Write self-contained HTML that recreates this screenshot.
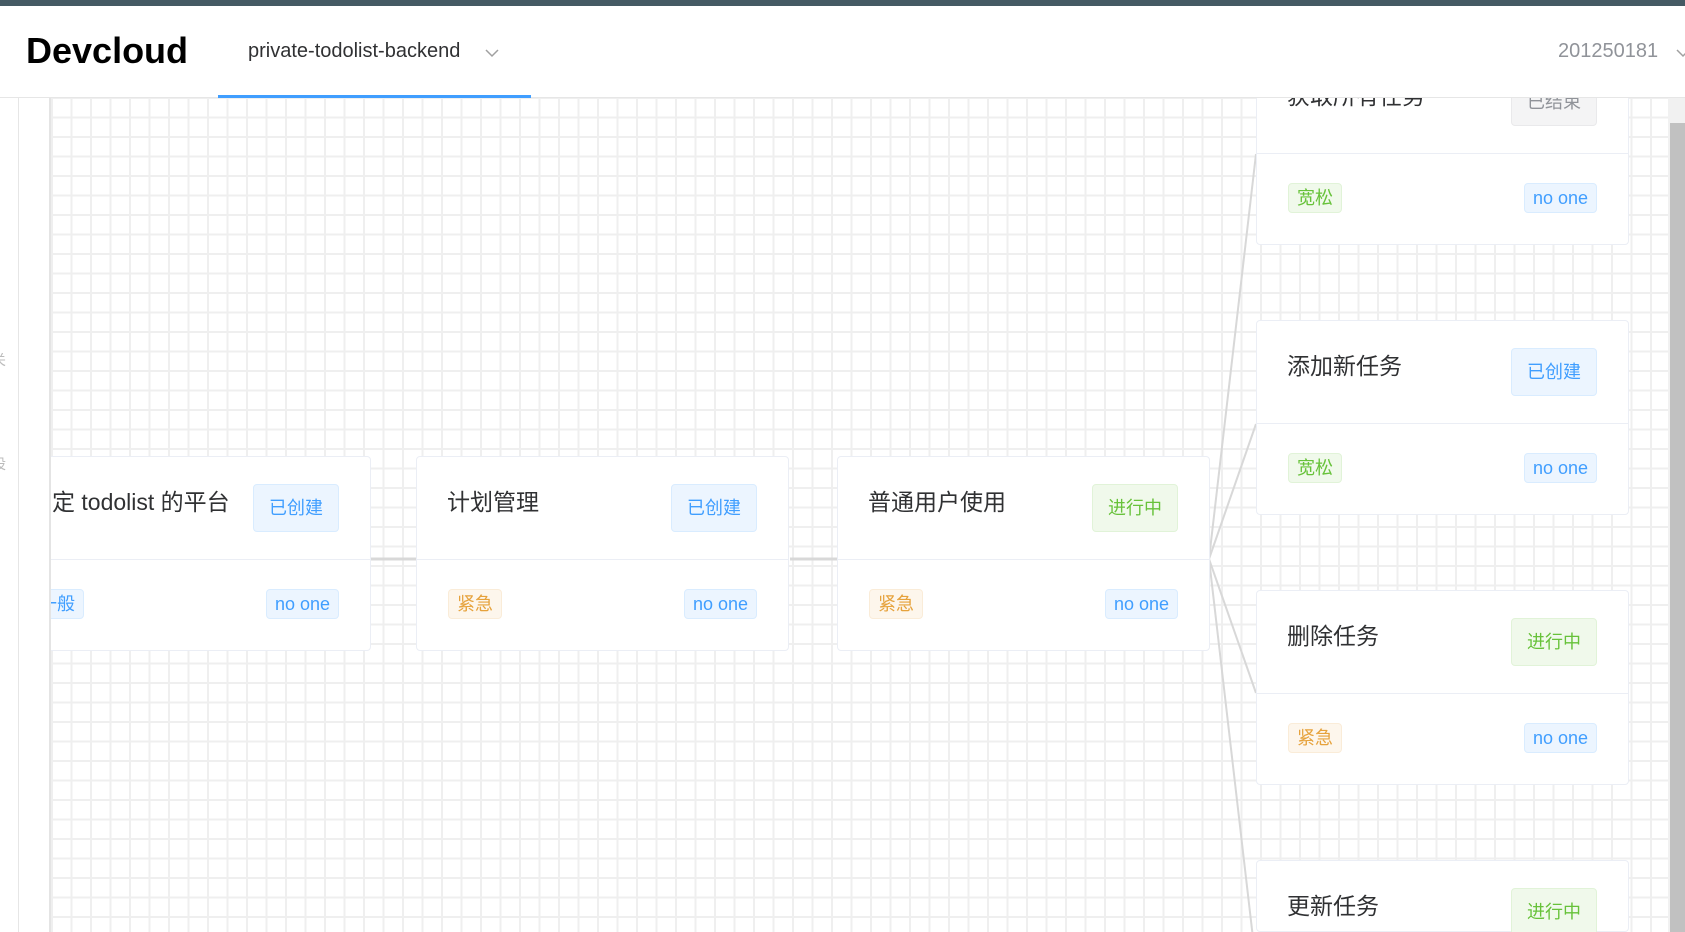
<!DOCTYPE html>
<html><head><meta charset="utf-8"><style>
*{margin:0;padding:0;box-sizing:border-box}
html,body{width:1685px;height:932px;overflow:hidden}
body{background:#fff;font-family:"Liberation Sans","Noto Sans CJK SC",sans-serif;position:relative}
.topbar{position:absolute;left:0;top:0;width:1685px;height:6px;background:#455a64}
.header{position:absolute;left:0;top:6px;width:1685px;height:92px;background:#fff;border-bottom:1px solid #e6e6e6;z-index:5}
.logo{position:absolute;left:26px;top:24px;font-size:36px;font-weight:bold;color:#000}
.proj{position:absolute;left:248px;top:34px;font-size:20px;color:#303133}
.chev{position:absolute;top:42px}
.uline{position:absolute;left:218px;top:89px;width:313px;height:3px;background:#409eff}
.user{position:absolute;left:1558px;top:34px;font-size:20px;color:#909399}
.side{position:absolute;left:0;top:98px;width:19px;height:834px;border-right:1px solid #e6e6e6;background:#fff;overflow:hidden}
.canvas{position:absolute;left:49px;top:98px;width:1619px;height:834px;border-left:2px solid #e4e4e4;
background-color:#fff;
background-image:linear-gradient(#efefef 2px,transparent 2px),linear-gradient(90deg,#efefef 2px,transparent 2px);
background-size:19.5px 19.5px;background-position:0 -1px;overflow:hidden}
.track{position:absolute;left:1668px;top:98px;width:17px;height:834px;background:#f1f1f1}
.thumb{position:absolute;left:1670px;top:123px;width:15px;height:809px;background:#c1c1c1}
.card{position:absolute;width:373px;height:195px;background:#fff;border:1px solid #ebeef5;border-radius:4px}
.card .top{height:103px;border-bottom:1px solid #ebeef5;position:relative}
.card .bot{height:90px;position:relative}
.card .t{position:absolute;left:30px;top:26px;font-size:23px;color:#303133;white-space:nowrap}
.st{position:absolute;right:31px;top:27px;width:86px;height:48px;border-radius:4px;font-size:18px;line-height:46px;text-align:center;border:1px solid}
.tag{position:absolute;top:29px;height:30px;line-height:28px;padding:0 8px;border-radius:4px;font-size:18px;border:1px solid}
.blue{background:#ecf5ff;border-color:#d9ecff;color:#409eff}
.green{background:#f0f9eb;border-color:#e1f3d8;color:#67c23a}
.orange{background:#fdf6ec;border-color:#faecd8;color:#e6a23c}
.gray{background:#f4f4f5;border-color:#e9e9eb;color:#909399}
</style></head><body>
<div class="topbar"></div>
<div class="side"><div style="position:absolute;left:-8px;top:252px;font-size:14px;color:#bbb">关</div><div style="position:absolute;left:-8px;top:356px;font-size:14px;color:#bbb">设</div></div>
<div class="canvas">
<svg width="1619" height="834" style="position:absolute;left:0;top:0">
<g stroke="#d8d8d8" fill="none">
<line x1="318" y1="461" x2="366" y2="461" stroke-width="3"/>
<line x1="739" y1="461" x2="787" y2="461" stroke-width="3"/>
<line x1="1158" y1="461" x2="1205" y2="56" stroke-width="2"/>
<line x1="1158" y1="461" x2="1205" y2="326" stroke-width="2"/>
<line x1="1158" y1="461" x2="1205" y2="595" stroke-width="2"/>
<line x1="1158" y1="461" x2="1205" y2="866" stroke-width="2"/>
</g></svg>
<div class="card" style="left:-53px;top:358px"><div class="top"><div class="t">制定 todolist 的平台</div><div class="st blue">已创建</div></div><div class="bot"><div class="tag blue" style="left:31px">一般</div><div class="tag blue" style="right:31px">no one</div></div></div>
<div class="card" style="left:365px;top:358px"><div class="top"><div class="t">计划管理</div><div class="st blue">已创建</div></div><div class="bot"><div class="tag orange" style="left:31px">紧急</div><div class="tag blue" style="right:31px">no one</div></div></div>
<div class="card" style="left:786px;top:358px"><div class="top"><div class="t">普通用户使用</div><div class="st green">进行中</div></div><div class="bot"><div class="tag orange" style="left:31px">紧急</div><div class="tag blue" style="right:31px">no one</div></div></div>
<div class="card" style="left:1205px;top:-48px"><div class="top"><div class="t">获取所有任务</div><div class="st gray">已结束</div></div><div class="bot"><div class="tag green" style="left:31px">宽松</div><div class="tag blue" style="right:31px">no one</div></div></div>
<div class="card" style="left:1205px;top:222px"><div class="top"><div class="t">添加新任务</div><div class="st blue">已创建</div></div><div class="bot"><div class="tag green" style="left:31px">宽松</div><div class="tag blue" style="right:31px">no one</div></div></div>
<div class="card" style="left:1205px;top:492px"><div class="top"><div class="t">删除任务</div><div class="st green">进行中</div></div><div class="bot"><div class="tag orange" style="left:31px">紧急</div><div class="tag blue" style="right:31px">no one</div></div></div>
<div class="card" style="left:1205px;top:762px;height:72px"><div class="top"><div class="t">更新任务</div><div class="st green">进行中</div></div></div>
</div>
<div class="track"></div><div class="thumb"></div>
<div class="header">
<div class="logo">Devcloud</div>
<div class="proj">private-todolist-backend</div>
<svg class="chev" style="left:485px" width="14" height="10"><path d="M1 2 L7 8 L13 2" stroke="#a0a0a0" stroke-width="1.5" fill="none"/></svg>
<div class="uline"></div>
<div class="user">201250181</div>
<svg class="chev" style="left:1676px" width="14" height="10"><path d="M1 2 L7 8 L13 2" stroke="#a0a0a0" stroke-width="1.5" fill="none"/></svg>
</div>
</body></html>
